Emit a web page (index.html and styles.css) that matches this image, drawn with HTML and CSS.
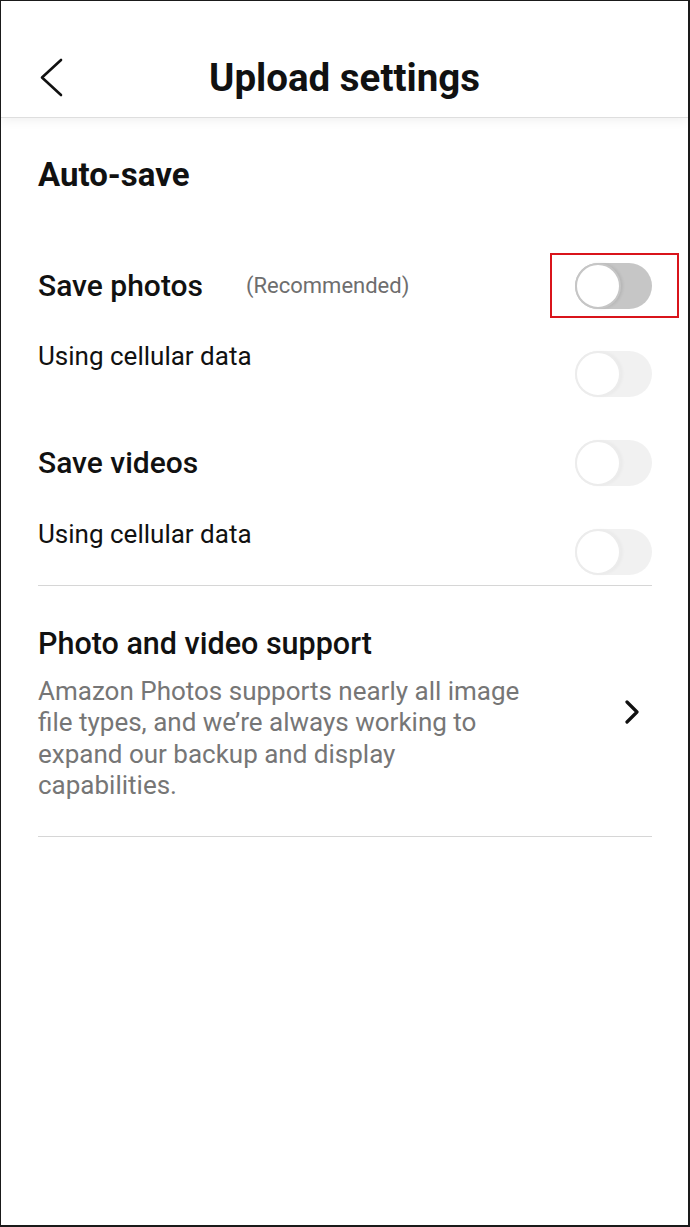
FILE: index.html
```html
<!DOCTYPE html>
<html lang="en">
<head>
<meta charset="utf-8">
<title>Upload settings</title>
<link rel="stylesheet" href="styles.css">
</head>
<body>
<div class="screen">
  <header class="topbar">
    <div class="back">
      <svg class="back-icon" width="26" height="40" viewBox="0 0 26 40">
        <polyline points="22,2 3,19.5 22,37" fill="none" stroke="#111" stroke-width="2.6" stroke-linecap="round" stroke-linejoin="round"/>
      </svg>
    </div>
    <h1 class="title">Upload settings</h1>
    <div></div>
  </header>

  <main class="content">
    <h2 class="section-title">Auto-save</h2>

    <div class="row row-main first">
      <div class="label-wrap">
        <span class="label">Save photos</span>
        <span class="hint">(Recommended)</span>
      </div>
      <div class="toggle-wrap">
        <div class="toggle active"><span class="knob"></span></div>
        <span class="highlight"></span>
      </div>
    </div>

    <div class="row row-sub">
      <span class="sublabel">Using cellular data</span>
      <div class="toggle disabled"><span class="knob"></span></div>
    </div>

    <div class="row row-main second">
      <span class="label">Save videos</span>
      <div class="toggle disabled"><span class="knob"></span></div>
    </div>

    <div class="row row-sub last">
      <span class="sublabel">Using cellular data</span>
      <div class="toggle disabled"><span class="knob"></span></div>
    </div>

    <div class="divider"></div>

    <div class="support">
      <div class="support-text">
        <h3 class="support-title">Photo and video support</h3>
        <p class="support-desc">Amazon Photos supports nearly all image file types, and we’re always working to expand our backup and display capabilities.</p>
      </div>
      <svg class="chev" width="16" height="26" viewBox="0 0 16 26">
        <polyline points="3,2 13,12 3,22" fill="none" stroke="#111" stroke-width="3.2" stroke-linecap="round" stroke-linejoin="round"/>
      </svg>
    </div>

    <div class="divider bottom"></div>
  </main>
</div>
</body>
</html>
```

FILE: styles.css
```css
* { box-sizing: border-box; }

html, body {
  margin: 0;
  padding: 0;
  background: #ffffff;
}

body {
  font-family: Roboto, "Noto Sans", "Liberation Sans", sans-serif;
  color: #111111;
}

.screen {
  width: 690px;
  height: 1227px;
  border: 1px solid #1a1a1a;
  border-right-width: 2px;
  border-bottom-width: 2px;
  overflow: hidden;
  background: #fff;
}

.topbar {
  height: 117px;
  padding-top: 38px;
  display: grid;
  grid-template-columns: 1fr auto 1fr;
  align-items: center;
  border-bottom: 1px solid #dedede;
  box-shadow: 0 3px 10px rgba(0, 0, 0, 0.06);
  position: relative;
}

.back {
  padding-left: 38px;
  display: flex;
  align-items: center;
}

.back-icon { display: block; }

.title {
  margin: 0;
  font-size: 38.5px;
  font-weight: 700;
  line-height: 40px;
  color: #111;
}

.content {
  padding: 0 36px 0 37px;
}

.section-title {
  margin: 37px 0 0;
  font-size: 33px;
  font-weight: 700;
  line-height: 40px;
}

.row {
  display: flex;
  justify-content: space-between;
}

.row-main {
  align-items: center;
  height: 46px;
}

.row-main.first { margin-top: 68px; }
.row-main.second { margin-top: 43px; }

.row-sub {
  align-items: flex-start;
  margin-top: 32px;
}
.row-sub.last { margin-top: 33px; }

.row-sub .toggle { margin-top: 10px; }

.label-wrap {
  display: flex;
  align-items: center;
  gap: 43px;
}

.label {
  font-size: 30px;
  font-weight: 500;
  line-height: 36px;
}

.hint {
  font-size: 22px;
  color: #6e6e6e;
  line-height: 30px;
}

.sublabel {
  font-size: 26px;
  line-height: 30px;
}

.toggle-wrap {
  position: relative;
}

.highlight {
  position: absolute;
  left: -25px;
  right: -27px;
  top: -10px;
  bottom: -9px;
  border: 2px solid #d9141b;
}

.toggle {
  width: 77px;
  height: 46px;
  border-radius: 23px;
  position: relative;
  flex: none;
}

.toggle .knob {
  position: absolute;
  left: 0;
  top: 0;
  width: 46px;
  height: 46px;
  border-radius: 50%;
  background: #fff;
}

.toggle.active { background: #c6c6c6; }
.toggle.active .knob {
  border: 2px solid #c6c6c6;
  box-shadow: 2px 0 3px rgba(0, 0, 0, 0.08);
}

.toggle.disabled { background: #f1f1f1; }
.toggle.disabled .knob {
  border: 2px solid #ececec;
  box-shadow: 2px 0 3px rgba(0, 0, 0, 0.03);
}

.divider {
  height: 1px;
  background: #d6d6d6;
  margin-top: 10px;
}

.support {
  display: flex;
  align-items: center;
  justify-content: space-between;
  padding-top: 40px;
}

.support-text { width: 496px; }

.support-title {
  margin: 0;
  font-size: 30.5px;
  font-weight: 500;
  line-height: 36px;
}

.support-desc {
  margin: 14px 0 0;
  font-size: 26px;
  line-height: 31.3px;
  color: #767676;
}

.chev {
  display: block;
  margin-right: 12px;
  margin-top: -1px;
}

.divider.bottom { margin-top: 35px; }
```
